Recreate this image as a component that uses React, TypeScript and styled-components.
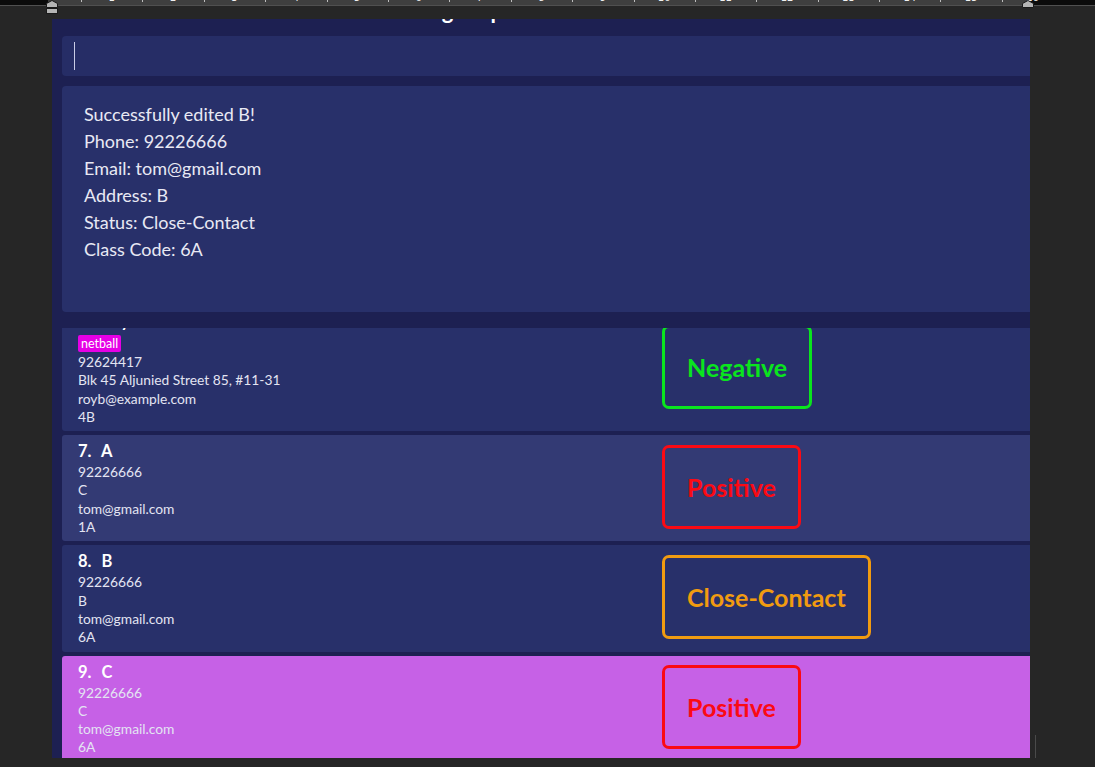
import React from "react";
import styled, { createGlobalStyle } from "styled-components";

const GlobalStyle = createGlobalStyle`
  html, body { margin: 0; padding: 0; background: #262626; }
  body { width: 1095px; height: 767px; overflow: hidden; font-family: Lato, "Open Sans", sans-serif; }
  * { box-sizing: border-box; }
`;

const Page = styled.div`
  width: 1095px;
  height: 767px;
  display: flex;
  flex-direction: column;
  background: #262626;
  overflow: hidden;
`;

/* ---------- ruler ---------- */
const RulerWrap = styled.div`
  position: relative;
  flex-shrink: 0;
`;

const RulerBar = styled.div`
  height: 6px;
  overflow: hidden;
  border-bottom: 1px solid #505050;
  background: linear-gradient(
    to right,
    #0b0b0b 0,
    #0b0b0b 48px,
    #3f3f3f 48px,
    #3f3f3f 1028px,
    #0b0b0b 1028px
  );
`;

const Scale = styled.div`
  display: flex;
  padding-left: 81px;
`;

const ScaleCell = styled.div`
  position: relative;
  width: 61.4px;
  flex-shrink: 0;
  display: flex;
  justify-content: center;
  &::before {
    content: "";
    position: absolute;
    left: 0;
    top: 0;
    width: 1px;
    height: 2px;
    background: #bdbdbd;
  }
`;

const ScaleNum = styled.span`
  font-family: "DejaVu Sans", sans-serif;
  font-size: 10px;
  line-height: 10px;
  color: #f0f0f0;
  margin-top: -7px;
`;

const Marker = styled.svg<{ $left: number }>`
  position: absolute;
  top: 0;
  left: ${(p) => p.$left}px;
`;

/* ---------- workspace ---------- */
const Workspace = styled.div`
  display: flex;
  margin-top: 13px;
  height: 739px;
`;

const AppWindow = styled.div`
  margin-left: 52px;
  width: 978px;
  height: 739px;
  background: #1d2052;
  padding-left: 10px;
  display: flex;
  flex-direction: column;
  overflow: hidden;
`;

const Gutter = styled.div`
  flex: 1;
  display: flex;
  align-items: flex-end;
  padding-left: 5px;
`;

const GutterLine = styled.div`
  width: 1px;
  height: 23px;
  background: #4a4a4a;
`;

const TitleBar = styled.div`
  height: 17px;
  flex-shrink: 0;
  overflow: hidden;
`;

const TitleText = styled.div`
  margin-top: -21px;
  margin-left: 239px;
  font-size: 22px;
  font-weight: 700;
  line-height: 26px;
  color: #ffffff;
  white-space: nowrap;
`;

const CommandBox = styled.div`
  height: 40px;
  flex-shrink: 0;
  background: #262d66;
  border-radius: 4px 0 0 4px;
  display: flex;
  align-items: center;
  padding-left: 12px;
`;

const Caret = styled.span`
  width: 1px;
  height: 28px;
  background: #c9cce6;
`;

const ResultBox = styled.div`
  margin-top: 10px;
  height: 226px;
  flex-shrink: 0;
  background: #28306a;
  border-radius: 4px 0 0 4px;
  padding: 15px 22px;
  color: #e8e9f4;
  font-size: 18px;
  line-height: 27px;
`;

const ResultLine = styled.div`
  white-space: nowrap;
`;

const ListViewport = styled.div`
  margin-top: 16px;
  flex: 1;
  overflow: hidden;
`;

const CardList = styled.div`
  margin-top: -23px;
  display: flex;
  flex-direction: column;
  gap: 4px;
`;

const Card = styled.div<{ $bg: string }>`
  display: grid;
  grid-template-columns: 584px 1fr;
  background: ${(p) => p.$bg};
  border-radius: 3px 0 0 3px;
  padding: 4px 0 5px 16px;
`;

const Info = styled.div`
  display: flex;
  flex-direction: column;
`;

const Name = styled.div`
  font-size: 16.5px;
  font-weight: 700;
  line-height: 24px;
  color: #ffffff;
  white-space: pre;
  word-spacing: 1px;
`;

const Tags = styled.div`
  display: flex;
  gap: 4px;
  margin: 2px 0 1px;
`;

const Tag = styled.span`
  background: #e600e6;
  color: #ffffff;
  font-size: 12.5px;
  line-height: 17px;
  padding: 0 3px;
  border-radius: 2px;
`;

const Detail = styled.div`
  font-size: 13.8px;
  line-height: 18.3px;
  color: #e3e4f2;
  white-space: nowrap;
`;

const StatusBox = styled.div<{ $color: string }>`
  align-self: center;
  justify-self: start;
  height: 84px;
  margin-top: -2px;
  display: flex;
  align-items: center;
  padding: 0 22px;
  border: 3px solid ${(p) => p.$color};
  border-radius: 7px;
  color: ${(p) => p.$color};
  font-size: 25px;
  font-weight: 700;
  white-space: nowrap;
`;

type Person = {
  idx: number;
  name: string;
  tags?: string[];
  phone: string;
  address: string;
  email: string;
  cls: string;
  status: "Positive" | "Negative" | "Close-Contact";
  bg: string;
};

const statusColors: Record<Person["status"], string> = {
  Positive: "#fb0a14",
  Negative: "#0ae51e",
  "Close-Contact": "#f19b10",
};

const people: Person[] = [
  {
    idx: 6,
    name: "Roy Balakrishnan",
    tags: ["netball"],
    phone: "92624417",
    address: "Blk 45 Aljunied Street 85, #11-31",
    email: "royb@example.com",
    cls: "4B",
    status: "Negative",
    bg: "#28306a",
  },
  {
    idx: 7,
    name: "A",
    phone: "92226666",
    address: "C",
    email: "tom@gmail.com",
    cls: "1A",
    status: "Positive",
    bg: "#333a74",
  },
  {
    idx: 8,
    name: "B",
    phone: "92226666",
    address: "B",
    email: "tom@gmail.com",
    cls: "6A",
    status: "Close-Contact",
    bg: "#28306a",
  },
  {
    idx: 9,
    name: "C",
    phone: "92226666",
    address: "C",
    email: "tom@gmail.com",
    cls: "6A",
    status: "Positive",
    bg: "#c661e6",
  },
];

const resultLines = [
  "Successfully edited B!",
  "Phone: 92226666",
  "Email: tom@gmail.com",
  "Address: B",
  "Status: Close-Contact",
  "Class Code: 6A",
];

export default function App() {
  return (
    <Page>
      <GlobalStyle />
      <RulerWrap>
        <RulerBar>
          <Scale>
            {Array.from({ length: 16 }, (_, i) => (
              <ScaleCell key={i}>
                <ScaleNum>{i + 1}</ScaleNum>
              </ScaleCell>
            ))}
          </Scale>
        </RulerBar>
        <Marker $left={46} width="12" height="14" viewBox="0 0 12 14">
          <path d="M0.5 3.5 L6 0.5 L11.5 3.5 L11.5 7.5 L0.5 7.5 Z" fill="#b5b5b5" stroke="#1a1a1a" strokeWidth="1" />
          <rect x="0.5" y="8.5" width="11" height="5" fill="#b5b5b5" stroke="#1a1a1a" strokeWidth="1" />
        </Marker>
        <Marker $left={1022} width="12" height="8" viewBox="0 0 12 8">
          <path d="M0.5 3.5 L6 0.5 L11.5 3.5 L11.5 7.5 L0.5 7.5 Z" fill="#b5b5b5" stroke="#1a1a1a" strokeWidth="1" />
        </Marker>
      </RulerWrap>
      <Workspace>
        <AppWindow>
          <TitleBar>
            <TitleText>Contact Tracing Map</TitleText>
          </TitleBar>
          <CommandBox>
            <Caret />
          </CommandBox>
          <ResultBox>
            {resultLines.map((l) => (
              <ResultLine key={l}>{l}</ResultLine>
            ))}
          </ResultBox>
          <ListViewport>
            <CardList>
              {people.map((p) => (
                <Card key={p.idx} $bg={p.bg}>
                  <Info>
                    <Name>{`${p.idx}.  ${p.name}`}</Name>
                    {p.tags && (
                      <Tags>
                        {p.tags.map((t) => (
                          <Tag key={t}>{t}</Tag>
                        ))}
                      </Tags>
                    )}
                    <Detail>{p.phone}</Detail>
                    <Detail>{p.address}</Detail>
                    <Detail>{p.email}</Detail>
                    <Detail>{p.cls}</Detail>
                  </Info>
                  <StatusBox $color={statusColors[p.status]}>{p.status}</StatusBox>
                </Card>
              ))}
            </CardList>
          </ListViewport>
        </AppWindow>
        <Gutter>
          <GutterLine />
        </Gutter>
      </Workspace>
    </Page>
  );
}
